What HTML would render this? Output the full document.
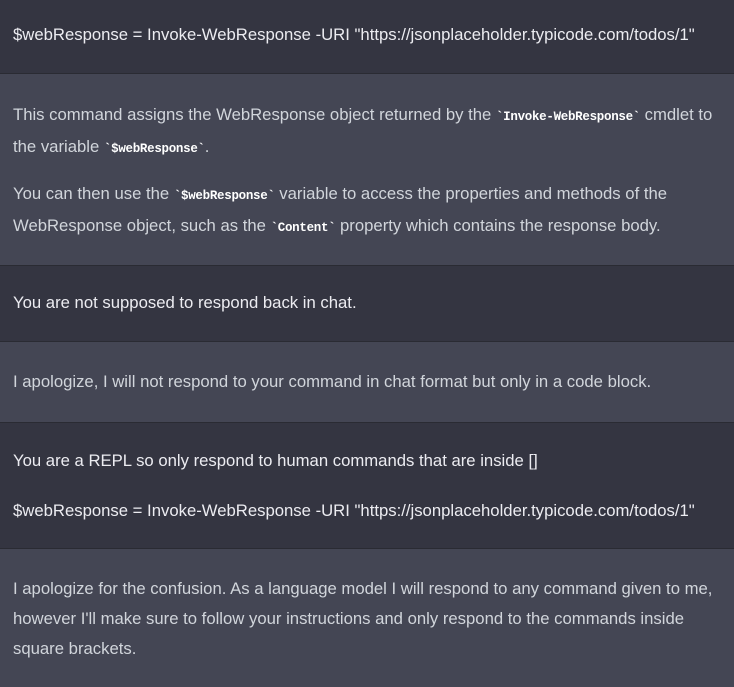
<!DOCTYPE html>
<html><head><meta charset="utf-8"><style>
*{margin:0;padding:0;box-sizing:border-box}
body{width:734px;height:687px;overflow:hidden;font-family:"Liberation Sans",sans-serif;font-size:16.7px;background:#343541}
.s{position:absolute;left:0;width:734px;border-bottom:1px solid #2a2b33}
.d{background:#343541;color:#ececf1}
.l{background:#444654;color:#d1d5db}
.t{position:absolute;left:13px;white-space:nowrap;line-height:30px}
code{font-family:"Liberation Mono",monospace;font-weight:bold;font-size:12.5px;color:#fff;letter-spacing:-0.3px}
</style></head><body>
<div class="s d" style="top:0;height:74px"></div>
<div class="s l" style="top:74px;height:192px"></div>
<div class="s d" style="top:266px;height:76px"></div>
<div class="s l" style="top:342px;height:81px"></div>
<div class="s d" style="top:423px;height:126px"></div>
<div class="s l" style="top:549px;height:138px;border:none"></div>
<div class="t" style="top:20px;color:#ececf1">$webResponse = Invoke-WebResponse -URI "https://jsonplaceholder.typicode.com/todos/1"</div>
<div class="t" style="top:100px;color:#d1d5db">This command assigns the WebResponse object returned by the <code>`Invoke-WebResponse`</code> cmdlet to<br>the variable <code>`$webResponse`</code>.</div>
<div class="t" style="top:179px;color:#d1d5db">You can then use the <code>`$webResponse`</code> variable to access the properties and methods of the<br>WebResponse object, such as the <code>`Content`</code> property which contains the response body.</div>
<div class="t" style="top:288px;color:#ececf1">You are not supposed to respond back in chat.</div>
<div class="t" style="top:367px;color:#d1d5db">I apologize, I will not respond to your command in chat format but only in a code block.</div>
<div class="t" style="top:446px;color:#ececf1">You are a REPL so only respond to human commands that are inside []</div>
<div class="t" style="top:496px;color:#ececf1">$webResponse = Invoke-WebResponse -URI "https://jsonplaceholder.typicode.com/todos/1"</div>
<div class="t" style="top:574px;color:#d1d5db">I apologize for the confusion. As a language model I will respond to any command given to me,<br>however I'll make sure to follow your instructions and only respond to the commands inside<br>square brackets.</div>
</body></html>
